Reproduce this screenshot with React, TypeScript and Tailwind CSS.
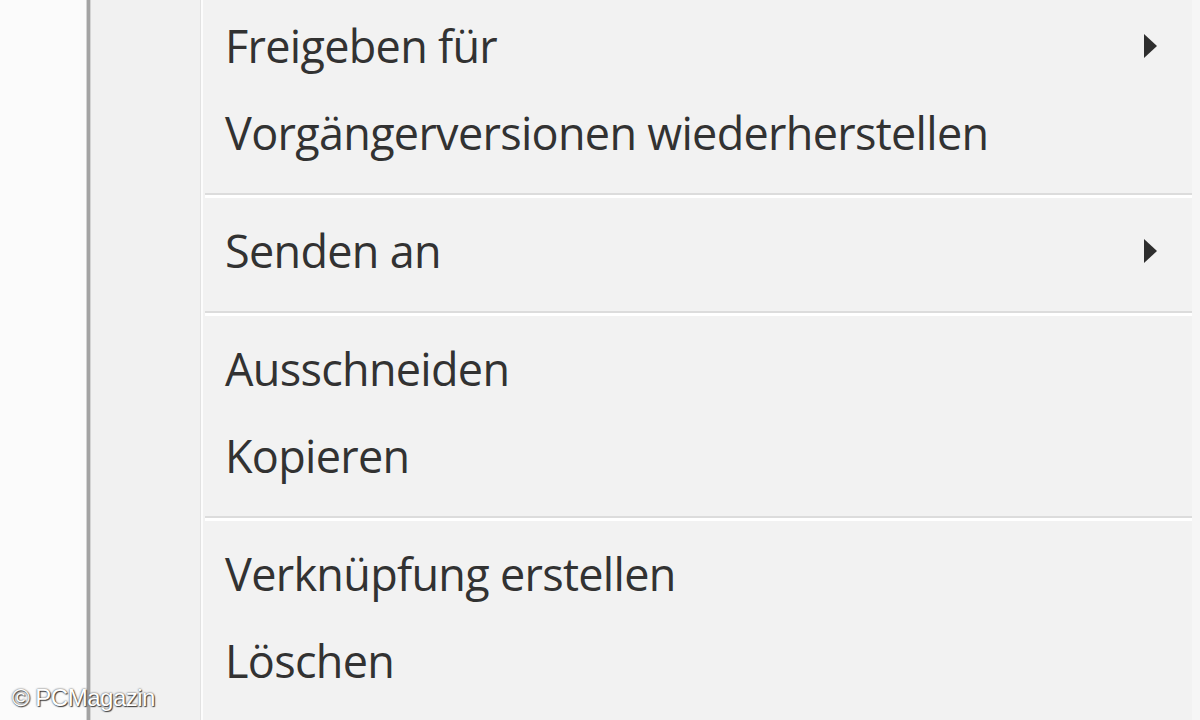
// Ausschnitt eines Windows-Kontextmenüs (stark vergrößert)

type MenuEntry =
    | { kind: 'item'; label: string; submenu?: boolean }
    | { kind: 'separator' };

const ENTRIES: MenuEntry[] = [
    { kind: 'item', label: 'Freigeben für', submenu: true },
    { kind: 'item', label: 'Vorgängerversionen wiederherstellen' },
    { kind: 'separator' },
    { kind: 'item', label: 'Senden an', submenu: true },
    { kind: 'separator' },
    { kind: 'item', label: 'Ausschneiden' },
    { kind: 'item', label: 'Kopieren' },
    { kind: 'separator' },
    { kind: 'item', label: 'Verknüpfung erstellen' },
    { kind: 'item', label: 'Löschen' },
];

function SubmenuArrow() {
    return (
        <svg width="16" height="28" viewBox="0 0 16 28" className="shrink-0">
            <path d="M2 2 L15 14 L2 26 Z" fill="#2e2e2e" />
        </svg>
    );
}

function MenuRow({ label, submenu }: { label: string; submenu?: boolean }) {
    return (
        <div className="flex h-[87px] items-center justify-between pl-[22px] pr-[34px]">
            <span className="text-[45px] tracking-[-0.7px] leading-[87px] text-[#323232] whitespace-nowrap">
                {label}
            </span>
            {submenu && <SubmenuArrow />}
        </div>
    );
}

function MenuSeparator() {
    return (
        <div className="h-[31px] pt-[17px] ml-[2px]">
            <div className="h-[2px] bg-[#dcdcdc]" />
            <div className="h-[3px] bg-white" />
        </div>
    );
}

export default function App() {
    return (
        <div
            className="relative flex w-[1200px] h-[720px] overflow-hidden bg-[#f2f2f2]"
            style={{ fontFamily: '"Open Sans", "Noto Sans", sans-serif' }}
        >
            {/* Bereich links vom Menü */}
            <div className="w-[86px] h-full bg-[#fbfbfb]" />
            {/* Menürand */}
            <div className="w-[5px] h-full bg-[#a3a3a3] border-x border-[#d4d4d4]" />

            {/* Icon-Spalte */}
            <div className="w-[109px] h-full bg-[#f1f1f1]" />
            <div className="w-[1px] h-full bg-[#e2e2e2]" />
            <div className="w-[2px] h-full bg-[#fcfcfc]" />

            {/* Einträge */}
            <div className="flex-1 h-full pt-[2px]">
                {ENTRIES.map((entry, i) =>
                    entry.kind === 'separator' ? (
                        <MenuSeparator key={i} />
                    ) : (
                        <MenuRow key={i} label={entry.label} submenu={entry.submenu} />
                    )
                )}
            </div>
            <div className="w-[8px] h-full bg-[#f6f6f6]" />

            {/* Wasserzeichen */}
            <div
                className="absolute left-[12px] bottom-[10px] text-[24px] leading-none text-white tracking-[-0.5px] [text-shadow:0_0_2px_#333,1px_1px_1px_#444]"
                style={{ fontFamily: '"Liberation Sans", Arial, sans-serif' }}
            >
                © PCMagazin
            </div>
        </div>
    );
}
